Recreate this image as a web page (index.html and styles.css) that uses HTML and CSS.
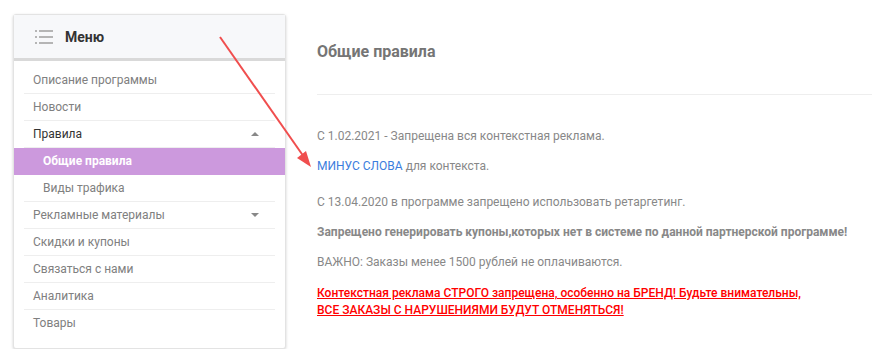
FILE: index.html
```html
<!DOCTYPE html>
<html>
<head>
<meta charset="utf-8">
<link rel="stylesheet" href="styles.css">
<title>Общие правила</title>
</head>
<body>
<div class="page">
  <div class="sidebar">
    <div class="sidebar-head">
      <svg class="menu-icon" width="18" height="14" viewBox="0 0 18 14">
        <rect x="0" y="0" width="2" height="2" fill="#b5b5b5"/>
        <rect x="4" y="0" width="14" height="2" fill="#b5b5b5"/>
        <rect x="0" y="6" width="2" height="2" fill="#b5b5b5"/>
        <rect x="4" y="6" width="14" height="2" fill="#b5b5b5"/>
        <rect x="0" y="12" width="2" height="2" fill="#b5b5b5"/>
        <rect x="4" y="12" width="14" height="2" fill="#b5b5b5"/>
      </svg>
      <span class="head-title">Меню</span>
    </div>
    <ul class="menu">
      <li class="menu-item">Описание программы</li>
      <li class="menu-item">Новости</li>
      <li class="menu-item open">Правила <span class="caret up"></span></li>
      <li class="submenu">
        <div class="sub-item active">Общие правила</div>
        <div class="sub-item">Виды трафика</div>
      </li>
      <li class="menu-item">Рекламные материалы <span class="caret down"></span></li>
      <li class="menu-item">Скидки и купоны</li>
      <li class="menu-item">Связаться с нами</li>
      <li class="menu-item">Аналитика</li>
      <li class="menu-item last">Товары</li>
    </ul>
  </div>

  <div class="content">
    <h2 class="title">Общие правила</h2>
    <div class="divider"></div>
    <p class="first">С 1.02.2021 - Запрещена вся контекстная реклама.</p>
    <p class="gap"><a href="#">МИНУС СЛОВА</a> для контекста.</p>
    <p>С 13.04.2020 в программе запрещено использовать ретаргетинг.</p>
    <p class="strong">Запрещено генерировать купоны,которых нет в системе по данной партнерской программе!</p>
    <p>ВАЖНО: Заказы менее 1500 рублей не оплачиваются.</p>
    <p class="warn">Контекстная реклама СТРОГО запрещена, особенно на БРЕНД! Будьте внимательны,<br>ВСЕ ЗАКАЗЫ С НАРУШЕНИЯМИ БУДУТ ОТМЕНЯТЬСЯ!</p>
  </div>
</div>

<svg class="pointer" width="872" height="361" viewBox="0 0 872 361">
  <line x1="220" y1="37" x2="304" y2="157" stroke="#f04e4e" stroke-width="2"/>
  <polygon points="311,167 297,158 306,151" fill="#f04e4e"/>
</svg>
</body>
</html>
```

FILE: styles.css
```css
body {
  margin: 0;
  font-family: Roboto, "Liberation Sans", sans-serif;
  background: #fff;
}

.page {
  display: flex;
  align-items: flex-start;
}

.sidebar {
  width: 271px;
  margin: 14px 0 0 13px;
  border: 1px solid #e3e3e3;
  border-radius: 3px;
  box-shadow: 0 1px 3px rgba(0, 0, 0, 0.18);
  background: #fff;
}

.sidebar-head {
  display: flex;
  align-items: center;
  height: 46px;
  padding-left: 21px;
  background: #f7f8fa;
  border-bottom: 3px solid #d9d9d9;
  box-sizing: border-box;
}

.menu-icon {
  display: block;
}

.head-title {
  margin-left: 12px;
  font-size: 14px;
  font-weight: bold;
  color: #333;
}

.menu {
  list-style: none;
  margin: 0;
  padding: 6px 0 12px;
}

.menu-item {
  display: flex;
  align-items: center;
  justify-content: space-between;
  height: 26px;
  margin: 0 10px;
  padding: 0 16px 0 9px;
  border-bottom: 1px solid #eeeeee;
  font-size: 12px;
  color: #808080;
}

.menu-item.open {
  color: #333;
}

.menu-item.last {
  border-bottom: none;
}

.submenu::after {
  content: "";
  display: block;
  height: 1px;
  margin: -1px 10px 0;
  background: #eeeeee;
  position: relative;
}

.sub-item {
  height: 27px;
  line-height: 27px;
  padding-left: 29px;
  font-size: 12px;
  color: #808080;
}

.sub-item.active {
  background: #cc99dd;
  color: #fff;
  font-weight: bold;
}

.caret {
  width: 0;
  height: 0;
  border-left: 4px solid transparent;
  border-right: 4px solid transparent;
}

.caret.up {
  border-bottom: 4px solid #888;
}

.caret.down {
  border-top: 4px solid #888;
}

.content {
  flex: 1;
  margin-left: 31px;
  padding-top: 42px;
}

.title {
  margin: 0 0 32px;
  font-size: 16px;
  line-height: 20px;
  font-weight: bold;
  color: #757575;
}

.divider {
  height: 1px;
  background: #eeeeee;
}

.content p {
  margin: 0 0 12px;
  font-size: 12px;
  line-height: 18px;
  color: #888;
}

.content p.first {
  margin-top: 32px;
}

.content p.gap {
  margin-bottom: 18px;
}

.content a {
  color: #3b7ddd;
  text-decoration: none;
}

.content p.strong {
  font-weight: bold;
}

.content p.warn {
  margin-top: 14px;
  color: #ff0000;
  font-weight: 500;
  text-decoration: underline;
  line-height: 17px;
}

.pointer {
  position: absolute;
  left: 0;
  top: 0;
  pointer-events: none;
}
```
